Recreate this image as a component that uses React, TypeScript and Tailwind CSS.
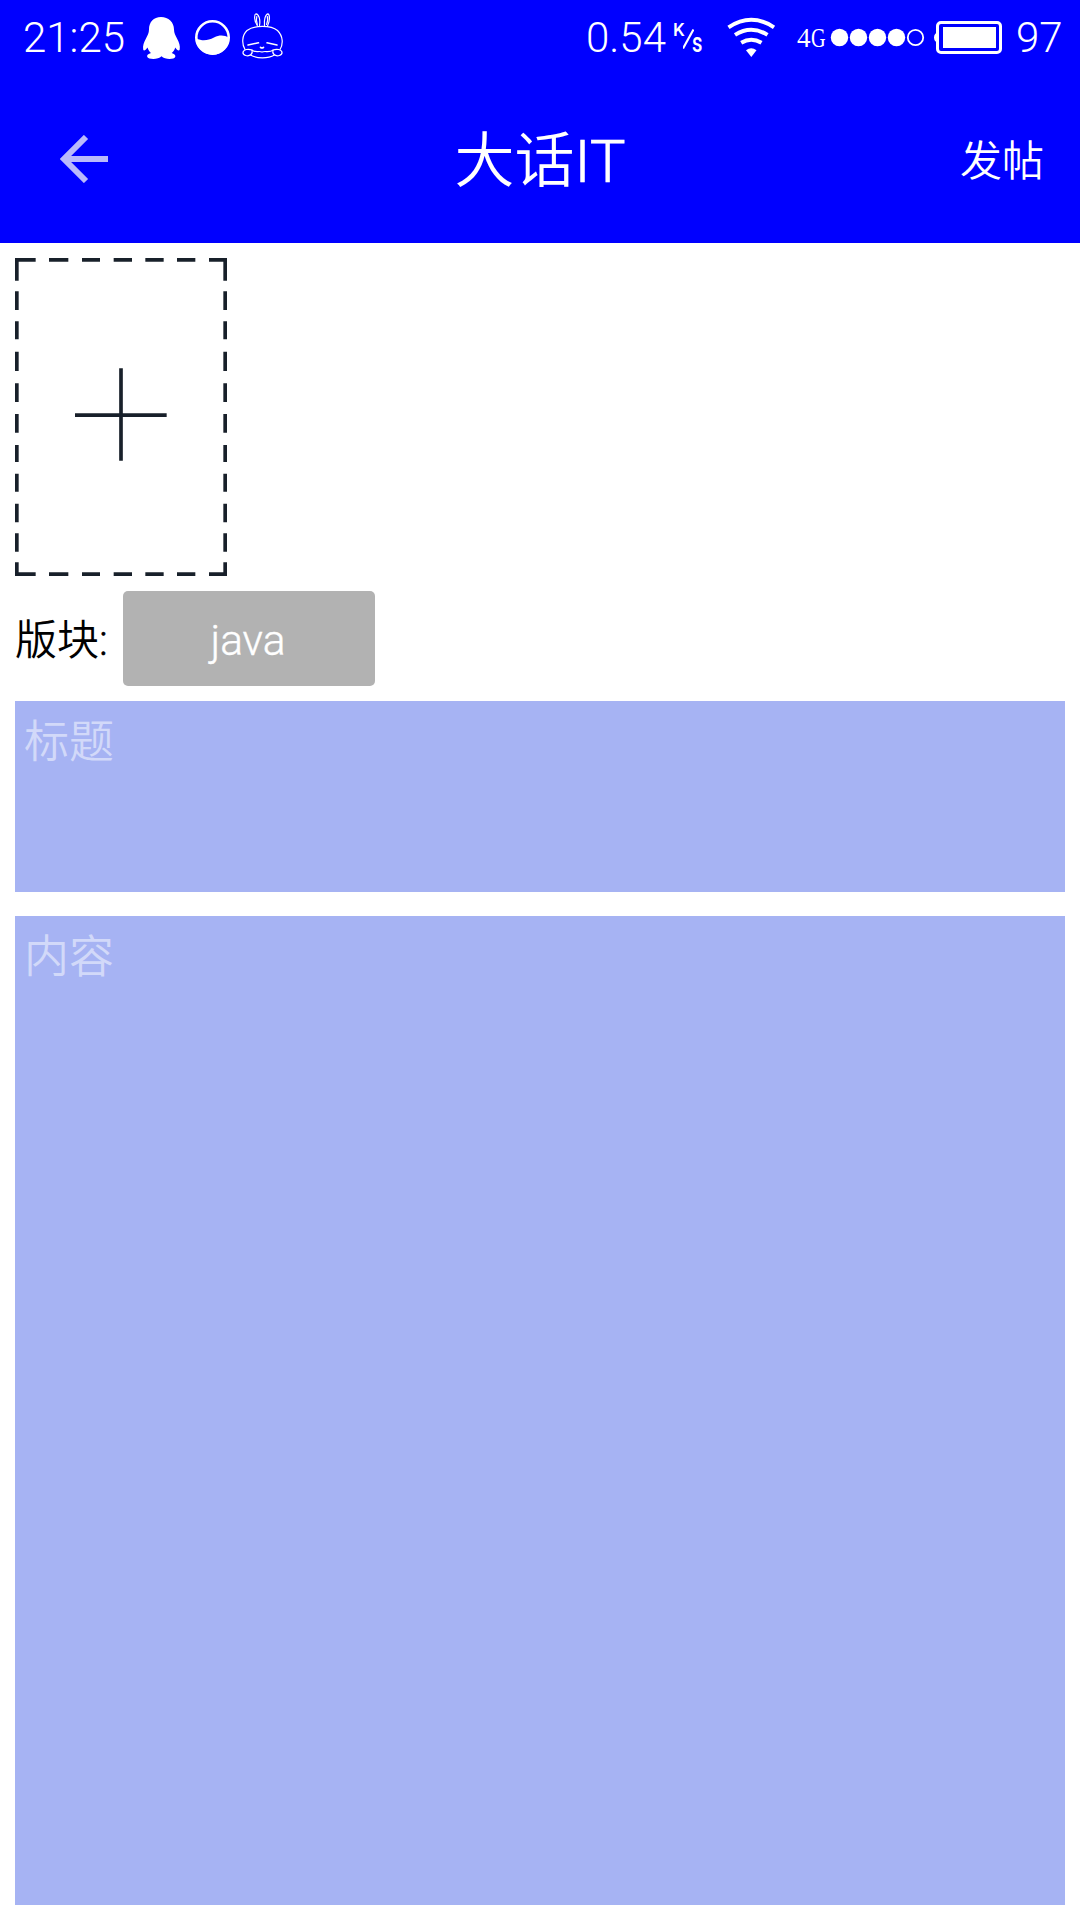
import React from "react";

function PenguinIcon() {
  return (
    <svg className="h-[76px] w-[44px]" viewBox="140 0 44 76" fill="#fff">
      <path d="M161 17C153.500 17 149 22 149 29.500C149 33 147.500 35.500 146 38.500C144 42 142.500 46 143.200 49.500C143.600 51.500 145.500 50.500 147.500 47.500C148.300 50 149.500 51.800 151 53C148.500 54 146.600 55 147.200 56.700C148.200 59.600 158 60 161.500 56.200C165 60 174.500 59.600 175.300 56.700C175.800 55 174 54 171.700 53C173.300 51.600 174.500 50 175.300 47.500C177 50.500 179.200 51.500 179.700 49.500C180.400 46 179 42 177 38.500C175.500 35.500 174 33 174 29.500C174 22 168.500 17 161 17Z" />
    </svg>
  );
}

function WaveIcon() {
  return (
    <svg className="h-[76px] w-[44px]" viewBox="190 0 44 76">
      <circle cx="212.500" cy="37.500" r="16.200" fill="none" stroke="#fff" strokeWidth="2.600" />
      <path d="M196 38.500C203 41.500 208 40.500 214 37.500C220 34.800 224 35 229 38A16.500 16.500 0 0 1 196 38.500Z" fill="#fff" />
    </svg>
  );
}

function RabbitIcon() {
  return (
    <svg
      className="h-[76px] w-[48px]"
      viewBox="238 0 48 76"
      fill="none"
      stroke="#fff"
      strokeWidth="1.200"
      strokeLinecap="round"
    >
      <path d="M257.500 26C254 21 254 14.500 256 13.800C259 14 260.500 20 259.500 25.500" />
      <path d="M257.300 24.500C256.300 21 256.300 18 256.800 16.500" />
      <path d="M264.500 25.500C263.800 20 265.500 14 268 13.800C270 15 270 21 267.500 26" />
      <path d="M266.600 24.500C267.800 21 267.800 18 267.300 16.500" />
      <path d="M245 49.500C241.500 44 242 35 247 30.500C254 25 271 25 277.500 30.500C283 36 283.500 44 280 49.500" />
      <path d="M248 45L258.500 42.800M267 42.800L277 45" strokeWidth="1.500" />
      <path d="M260.500 47.300Q262 48.600 263.500 47.300" strokeWidth="1.700" />
      <path d="M252 50.200C256 53 259 50.500 262 52C265 50.500 269 53 273 50.200" />
      <path d="M252 50C248 48.500 244 49.500 243 52C242.500 55.500 248 57 251 54.500C252.500 53 252.500 51.500 252 50Z" />
      <path d="M273 50C277 48.500 281 49.500 282 52C282.500 55.500 277 57 274 54.500C272.500 53 272.500 51.500 273 50Z" />
      <path d="M250.500 55C257 58.800 268 58.800 274.500 55" />
    </svg>
  );
}

function WifiIcon() {
  return (
    <svg className="h-[76px] w-[52px]" viewBox="725 0 52 76" fill="none" stroke="#fff" strokeWidth="4">
      <path d="M728.500 27.300Q751.300 12.200 774 27.300" />
      <path d="M735 34.900Q751.300 24.700 767.500 34.900" />
      <path d="M741.200 42.700Q751.300 36.700 761.500 42.700" />
      <path d="M746 50.200Q751.300 46.500 756.500 50.200L751.300 57Z" fill="#fff" stroke="none" />
    </svg>
  );
}

function SignalDots() {
  return (
    <svg className="h-[76px] w-[98px]" viewBox="830 0 98 76" fill="#fff">
      <circle cx="839.500" cy="37.500" r="8.700" />
      <circle cx="858.500" cy="37.500" r="8.700" />
      <circle cx="877.500" cy="37.500" r="8.700" />
      <circle cx="896.500" cy="37.500" r="8.700" />
      <circle cx="915.500" cy="37.500" r="7.700" fill="none" stroke="#fff" strokeWidth="1.800" />
    </svg>
  );
}

function BatteryIcon() {
  return (
    <svg className="h-[76px] w-[72px]" viewBox="932 0 72 76">
      <path d="M937 33.500H935.500Q934 35 934 37.500T935.500 41.500H937Z" fill="#fff" />
      <rect x="937.500" y="22.500" width="63" height="30" rx="3.500" fill="none" stroke="#fff" strokeWidth="3" />
      <rect x="943" y="27" width="53" height="21" fill="#fff" />
    </svg>
  );
}

function StatusBar() {
  return (
    <div className="flex h-[76px] items-center text-[42px] leading-[76px] font-light">
      <div className="ml-[23px] w-[117px]">21:25</div>
      <PenguinIcon />
      <div className="w-[6px]" />
      <WaveIcon />
      <div className="w-[4px]" />
      <RabbitIcon />
      <div className="ml-auto flex h-[76px] items-center">
        <div className="w-[87px]">0.54</div>
        <div className="flex h-[30px] w-[52px] leading-none font-normal">
          <span className="w-[10px] text-[18px] leading-[14px] font-medium">K</span>
          <svg className="h-[30px] w-[11px]" viewBox="0 0 11 30" stroke="#fff" strokeWidth="2.200">
            <path d="M0 25.500L10.500 6.500" />
          </svg>
          <span className="-ml-[2px] origin-left scale-x-75 self-end text-[27px] leading-[19px] font-medium">s</span>
        </div>
        <WifiIcon />
        <div className="ml-[20px] flex w-[33px] font-['Liberation_Serif',serif] text-[27px] leading-[69px] font-normal">
          <span>4</span>
          <span className="origin-left scale-x-75">G</span>
        </div>
        <SignalDots />
        <div className="w-[4px]" />
        <BatteryIcon />
        <div className="ml-[12px] w-[64px]">97</div>
      </div>
    </div>
  );
}

function TitleBar() {
  return (
    <div className="mt-1 grid h-[163px] grid-cols-[1fr_auto_1fr] items-center font-[350]">
      <svg className="mb-[5px] ml-[60px] h-[48px] w-[48px]" viewBox="0 0 48 48" fill="none" stroke="#b9b9fb" strokeWidth="6">
        <path d="M26 2L4 24L26 46M5 24H48" />
      </svg>
      <h1 className="text-[60px] leading-[72px] font-[350]">
        大话<span className="font-light [-webkit-text-stroke:0.6px_white]">IT</span>
      </h1>
      <button className="mr-[36px] justify-self-end text-[42px] leading-[60px]">发帖</button>
    </div>
  );
}

function AddImage() {
  return (
    <svg className="h-[318px] w-[212px]" viewBox="45 84 636 954" fill="none" stroke="#18202a" strokeWidth="11">
      <path d="M45 89.500H107M147 89.500H205M246 89.500H300M341 89.500H396M436 89.500H491M531 89.500H586M627 89.500H681" />
      <path d="M45 1032.500H107M147 1032.500H205M246 1032.500H300M341 1032.500H396M436 1032.500H491M531 1032.500H586M627 1032.500H681" />
      <path d="M50.500 84V152M50.500 184V240M50.500 274V328M50.500 365V423M50.500 460V516M50.500 552V608M50.500 645V696M50.500 731V785M50.500 821V877M50.500 910V965M50.500 997V1038" />
      <path d="M675.500 84V152M675.500 184V240M675.500 274V328M675.500 365V423M675.500 460V516M675.500 552V608M675.500 645V696M675.500 731V785M675.500 821V877M675.500 910V965M675.500 997V1038" />
      <path d="M225 555.500H500M363 415V692" strokeWidth="11" />
    </svg>
  );
}

export default function App() {
  return (
    <div className="flex h-[1920px] w-[1080px] flex-col bg-white font-[Roboto,'Noto_Sans_CJK_SC',sans-serif]">
      <header className="h-[243px] bg-[#0000ff] text-white">
        <StatusBar />
        <TitleBar />
      </header>
      <main className="flex flex-1 flex-col px-[15px] py-[15px]">
        <AddImage />
        <div className="mt-[15px] flex h-[95px] items-center text-[42px] leading-[60px] font-[350]">
          <label className="w-[108px] pt-[5px] whitespace-nowrap text-black">
            版块<span className="font-light [-webkit-text-stroke:0.4px_black]">:</span>
          </label>
          <button className="h-[95px] w-[252px] rounded-[5px] bg-[#b2b2b2] pt-[4px] pr-[2px] text-[42.500px] font-light text-white [-webkit-text-stroke:0.4px_white]">
            java
          </button>
        </div>
        <textarea
          className="mt-[15px] block h-[191px] resize-none bg-[#a6b3f3] px-[9px] py-[12px] text-[45px] leading-[60px] font-[350] outline-none placeholder:text-[#d2d9f9]"
          placeholder="标题"
        />
        <textarea
          className="mt-[24px] block h-[989px] resize-none bg-[#a6b3f3] px-[9px] py-[12px] text-[45px] leading-[60px] font-[350] outline-none placeholder:text-[#d2d9f9]"
          placeholder="内容"
        />
      </main>
    </div>
  );
}
